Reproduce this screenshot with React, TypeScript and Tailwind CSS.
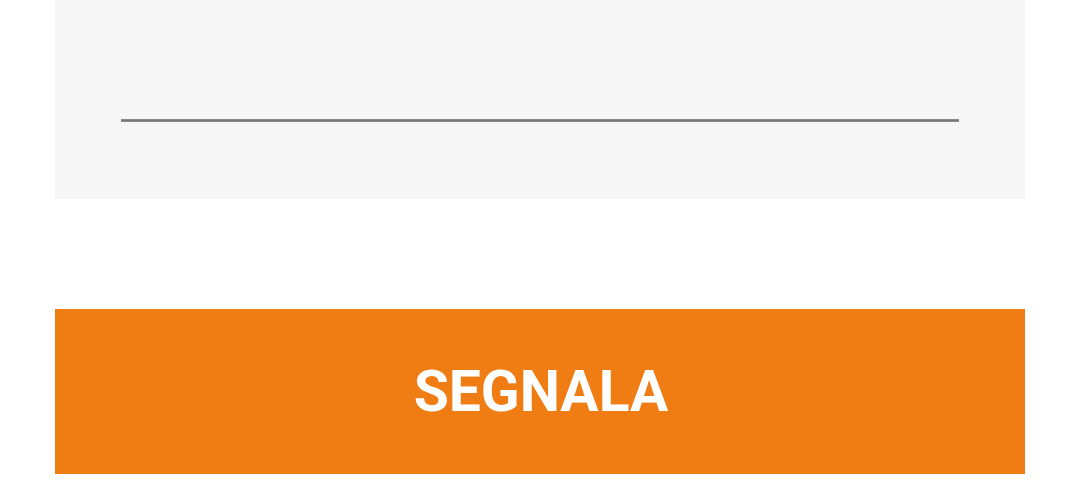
import React from "react";

const App: React.FC = () => {
  return (
    <main className="w-[1080px] h-[500px] bg-white px-[55px]" style={{ fontFamily: "Roboto, 'Liberation Sans', sans-serif" }}>
      {/* Campo di testo */}
      <div className="h-[199px] bg-[#f6f6f6] px-[66px] pt-[119px]">
        <div className="h-[3px] bg-[#757575] border-y border-[#8a8a8a]" />
      </div>

      {/* Pulsante */}
      <button className="mt-[110px] w-full h-[165px] bg-[#ef7d13] text-white text-[57px] font-bold uppercase leading-none flex items-center justify-center pl-[2px]">
        Segnala
      </button>
    </main>
  );
};

export default App;
